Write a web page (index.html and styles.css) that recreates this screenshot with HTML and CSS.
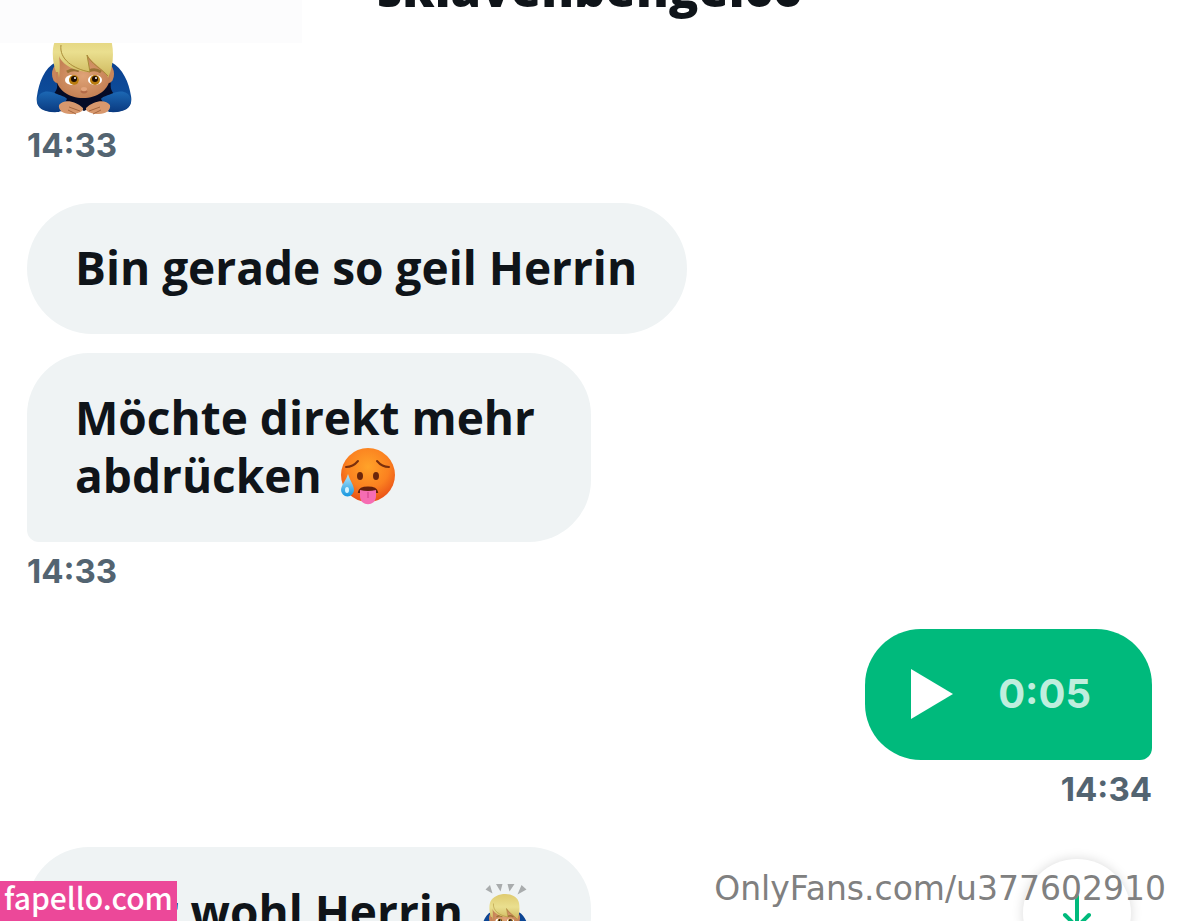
FILE: index.html
```html
<!DOCTYPE html>
<html lang="de">
<head>
    <meta charset="UTF-8">
    <meta name="viewport" content="width=device-width, initial-scale=1.0">
    <title>Chat</title>
    <link rel="stylesheet" href="styles.css">
</head>
<body>
    <!-- bowing person, used in two sizes -->
    <svg class="defs" width="0" height="0" aria-hidden="true">
        <defs>
            <linearGradient id="sleeve" x1="0" y1="0" x2="0" y2="1">
                <stop offset="0" stop-color="#0b4190"/>
                <stop offset="0.65" stop-color="#0d4c9a"/>
                <stop offset="1" stop-color="#082b69"/>
            </linearGradient>
            <linearGradient id="cuff" x1="0" y1="0" x2="0" y2="1">
                <stop offset="0" stop-color="#1c68b4"/>
                <stop offset="1" stop-color="#0a3a80"/>
            </linearGradient>
            <linearGradient id="hair" x1="0" y1="0" x2="0" y2="1">
                <stop offset="0" stop-color="#dfcb70"/>
                <stop offset="0.5" stop-color="#eadf8f"/>
                <stop offset="1" stop-color="#cdb65b"/>
            </linearGradient>
            <radialGradient id="skin">
                <stop offset="0" stop-color="#dfa377"/>
                <stop offset="1" stop-color="#c58155"/>
            </radialGradient>
            <radialGradient id="hot" cx="0.5" cy="0.35" r="0.65">
                <stop offset="0" stop-color="#ffa329"/>
                <stop offset="0.6" stop-color="#fb8120"/>
                <stop offset="1" stop-color="#e94f17"/>
            </radialGradient>
            <linearGradient id="drop" x1="0" y1="0" x2="0" y2="1">
                <stop offset="0" stop-color="#b9e9fb"/>
                <stop offset="1" stop-color="#1596df"/>
            </linearGradient>
            <symbol id="bow" viewBox="0 0 96 110">
                <path fill="#a9acad" d="M9 11l9-9 5 17zM30 0h13l-4 15zM53 0h14l-10 15zM81 2l10 9-18 10z"/>
                <path fill="url(#sleeve)" d="M20 56C8 62 3 77 1 90c-2 11 5 15 16 16l31-3 31 3c11-1 18-5 16-16-2-13-8-28-20-34z"/>
                <path fill="#050b26" d="M20 74c3 8 0 11-3 15l8 3 23 13 26-13 5-3c-4-4-5-7-4-15z"/>
                <path fill="url(#cuff)" d="M1 93c3-9 12-9 20-5 5 2 9 3 10 5l-8 13C9 107 0 103 1 93zM95 93c-3-9-12-9-20-5-5 2-9 3-10 5l8 13c14 1 23-3 22-13z"/>
                <ellipse cx="21" cy="68" rx="5" ry="9" fill="#c9865b"/>
                <ellipse cx="73" cy="68" rx="5" ry="9" fill="#c9865b"/>
                <path fill="url(#skin)" d="M20 48h54v22c0 14-13 22-27 22S20 84 20 70z"/>
                <path fill="#d8986d" d="M23 99c4-6 16-5 24 3 1 4-7 6-13 6-7 0-12-4-11-9zM74 99c-4-6-16-5-24 3-1 4 7 6 13 6 7 0 12-4 11-9z"/>
                <path stroke="#a5663f" stroke-width="1" fill="none" d="M33 101l11 4M32 104l8 4M64 101l-11 4M65 104l-8 4"/>
                <path stroke="#9a7134" stroke-width="3" fill="none" d="M31 66q6-4 12-1M53 65q6-3 12 1"/>
                <path fill="url(#hair)" d="M23 72l-1-6-2 0c-3-8-5-22-1-31 5-10 17-15 30-15s25 6 27 18c2 10 1 24-4 34-1-7-12-11-21-23l3 17c-14 0-28-7-31-16 1 8 1 13 0 22z"/>
                <path stroke="#a98b37" stroke-width="1" fill="none" d="M25 39c-2 14 12 24 29 27l-3-17c3 8 16 15 21 21"/>
                <ellipse cx="36" cy="74" rx="7" ry="5" fill="#fff"/>
                <ellipse cx="59" cy="74" rx="7" ry="5" fill="#fff"/>
                <circle cx="38" cy="74" r="5" fill="#b97b0e"/>
                <circle cx="59" cy="74" r="5" fill="#b97b0e"/>
                <circle cx="38" cy="73" r="3" fill="#1d0c02"/>
                <circle cx="59" cy="73" r="3" fill="#1d0c02"/>
                <circle cx="39" cy="72" r="1" fill="#fff"/>
                <circle cx="60" cy="72" r="1" fill="#fff"/>
                <path stroke="#b36a47" stroke-width="2" fill="none" d="M45 85q3 3 6 0"/>
                <ellipse cx="48" cy="83" rx="3" ry="2" fill="#e3a57d"/>
            </symbol>
        </defs>
    </svg>

    <header class="chat-header">
        <div class="header-shade"></div>
        <h1>sklavenbengel66</h1>
    </header>

    <main class="chat">
        <section class="group">
            <svg class="emoji-large" role="img" aria-label="Verbeugung"><use href="#bow"/></svg>
            <time>14:33</time>
        </section>

        <section class="group">
            <p class="bubble">Bin gerade so geil Herrin</p>
            <p class="bubble wide last">Möchte direkt mehr abdrücken
                <svg class="emoji-hot" viewBox="0 0 56 58" role="img" aria-label="Heiß">
                    <circle cx="28" cy="28" r="27" fill="url(#hot)"/>
                    <path d="M6 20q7 0 12-6M37 14q5 6 12 6" stroke="#7b2f0c" stroke-width="2" stroke-linecap="round" fill="none"/>
                    <ellipse cx="20" cy="29" rx="3" ry="4" fill="#6b260b"/>
                    <ellipse cx="36" cy="29" rx="3" ry="4" fill="#6b260b"/>
                    <path d="M19 45c1-6 17-6 18 0z" fill="#64200d" stroke="#64200d" stroke-width="2"/>
                    <path d="M20 43q8 2 16 0v6c0 11-16 11-16 0z" fill="#f66db3"/>
                    <path d="M28 45v6" stroke="#cf3e88" stroke-width="1"/>
                    <path d="M8 27c2 7 6 11 6 16a6 6 0 0 1-13 0c0-5 5-9 7-16z" fill="url(#drop)"/>
                    <ellipse cx="7" cy="43" rx="2" ry="3" fill="#d5f3ff"/>
                </svg>
            </p>
            <time>14:33</time>
        </section>

        <section class="group sent">
            <div class="bubble voice">
                <button class="play" type="button" aria-label="Abspielen">
                    <svg viewBox="0 0 42 50"><path d="M0 0l42 25L0 50z" fill="#fff"/></svg>
                </button>
                <span class="duration">0:05</span>
            </div>
            <time>14:34</time>
        </section>

        <section class="group">
            <p class="bubble wide">Sehr wohl Herrin
                <svg class="emoji-small" role="img" aria-label="Verbeugung"><use href="#bow"/></svg>
            </p>
        </section>
    </main>

    <button class="scroll-down" type="button" aria-label="Nach unten">
        <svg viewBox="0 0 32 36" fill="none" stroke="#00ba7c" stroke-width="4" stroke-linecap="round"><path d="M16 2v31M4 21l12 12 12-12"/></svg>
    </button>
    <div class="site-tag">fapello.com</div>
    <div class="watermark">OnlyFans.com/u377602910</div>
</body>
</html>
```
FILE: styles.css
```css
* {
    box-sizing: border-box;
}
body {
    margin: 0;
    height: 100vh;
    overflow: hidden;
    position: relative;
    display: flex;
    flex-direction: column;
    background: #fff;
    color: #0f1419;
    font-family: "Open Sans", "Noto Sans", sans-serif;
    font-weight: 700;
}
.defs {
    position: absolute;
}
.chat-header {
    position: relative;
    flex: none;
    height: 43px;
    display: flex;
    justify-content: center;
    align-items: flex-end;
    overflow: hidden;
}
.header-shade {
    position: absolute;
    top: 0;
    left: 0;
    width: 302px;
    height: 100%;
    background: #fcfcfd;
}
h1 {
    margin: 0;
    padding-bottom: 26px;
    font-size: 49px;
    font-weight: 800;
    line-height: 58px;
}
.chat {
    flex: 1;
    min-height: 0;
    overflow: hidden;
    padding: 0 27px;
}
.group {
    display: flex;
    flex-direction: column;
    align-items: flex-start;
    margin-bottom: 41px;
}
.sent {
    align-items: flex-end;
}
time {
    margin-top: 12px;
    font-family: Inter, sans-serif;
    font-size: 33px;
    line-height: 34px;
    color: #536471;
}
.bubble {
    margin: 0;
    padding: 35px 50px 38px 48px;
    border-radius: 66px;
    background: #eff3f4;
    font-size: 46px;
    line-height: 58px;
}
.bubble + .bubble {
    margin-top: 19px;
}
.wide {
    width: 100%;
    max-width: 564px;
    padding-right: 36px;
    border-radius: 62px;
}
.last {
    border-bottom-left-radius: 12px;
}
.voice {
    display: flex;
    align-items: center;
    gap: 45px;
    padding: 36px 61px 37px 46px;
    border-radius: 56px 56px 12px 56px;
    background: #00ba7c;
}
.play {
    width: 42px;
    height: 50px;
    padding: 0;
    border: none;
    background: none;
    cursor: pointer;
}
.play svg {
    display: block;
    width: 100%;
    height: 100%;
}
.duration {
    font-family: Inter, sans-serif;
    font-size: 40px;
    color: #bfeede;
}
.emoji-large {
    width: 96px;
    height: 110px;
    margin: -37px 0 0 9px;
}
.emoji-hot {
    width: 56px;
    height: 58px;
    margin: -10px 0 -10px 6px;
    vertical-align: -2px;
}
.emoji-small {
    width: 48px;
    height: 55px;
    margin: -10px 0 -10px 6px;
    vertical-align: 0;
}
.scroll-down {
    position: absolute;
    right: 48px;
    bottom: -46px;
    width: 108px;
    height: 108px;
    padding: 0;
    border: none;
    border-radius: 50%;
    background: #fff;
    box-shadow: 0 0 12px rgba(0, 0, 0, 0.15);
    cursor: pointer;
}
.scroll-down svg {
    width: 32px;
    height: 36px;
}
.site-tag {
    position: absolute;
    left: 0;
    bottom: 0;
    padding: 0 4px 8px;
    background: #ec4899;
    color: #fff;
    font-family: "Noto Sans CJK SC", sans-serif;
    font-size: 30px;
    font-weight: 500;
    line-height: 32px;
}
.watermark {
    position: absolute;
    right: 13px;
    bottom: 12px;
    color: #808080;
    font-family: "DejaVu Sans", sans-serif;
    font-size: 33px;
    font-weight: 400;
    line-height: 40px;
}
```
